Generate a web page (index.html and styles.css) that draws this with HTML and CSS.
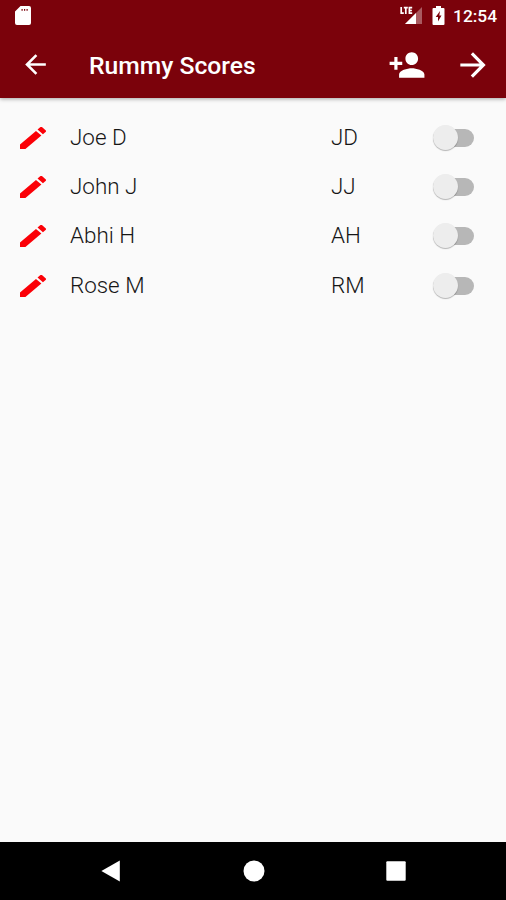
FILE: index.html
```html
<!DOCTYPE html>
<html lang="en">
<head>
<meta charset="utf-8">
<title>Rummy Scores</title>
<link rel="stylesheet" href="styles.css">
</head>
<body>
<svg class="defs" aria-hidden="true">
  <symbol id="pencil" viewBox="3 3 18 18" preserveAspectRatio="none"><path d="M3 17.25V21h3.75L17.81 9.94l-3.75-3.75L3 17.25zM20.71 7.04c.39-.39.39-1.02 0-1.41l-2.34-2.34c-.39-.39-1.02-.39-1.41 0l-1.83 1.83 3.75 3.75 1.83-1.83z"/></symbol>
</svg>
<header class="header">
  <div class="status">
    <svg class="sd" viewBox="0 0 16 19"><path fill-rule="evenodd" d="M5.500 0H14a2 2 0 0 1 2 2v15a2 2 0 0 1-2 2H2a2 2 0 0 1-2-2V5.500zM6.500 3v1.800h1.200V3zM9 3v1.800h1.200V3zM11.500 3v1.800h1.200V3z"/></svg>
    <div class="signal">
      <svg viewBox="0 0 24 20"><path class="dim" d="M22 1v17H5z"/><path d="M16 7V18H5z"/><path class="mask" d="M0 0h13v9H0z"/><path class="lte" d="M1.200 1v6.200h2.600M3.800 1.700h4M5.800 1.700v6.200M12.200 1.700H9.400v5.500h2.800M9.400 4.500h2.500"/></svg>
    </div>
    <svg class="battery" viewBox="0 0 12 19"><path fill-rule="evenodd" d="M3.500 0h5v2H11a1 1 0 0 1 1 1v15a1 1 0 0 1-1 1H1a1 1 0 0 1-1-1V3a1 1 0 0 1 1-1h2.500zM7.500 5L3.200 11h2.300v4.500L9 9.500H6.800z"/></svg>
    <span class="time">12:54</span>
  </div>
  <div class="toolbar">
    <svg class="back" viewBox="0 0 24 24"><path d="M20 11H7.830l5.590-5.590L12 4l-8 8 8 8 1.410-1.410L7.830 13H20v-2z"/></svg>
    <h1 class="title">Rummy Scores</h1>
    <svg class="add" viewBox="0 0 24 24"><path d="M15 12c2.210 0 4-1.790 4-4s-1.790-4-4-4-4 1.790-4 4 1.790 4 4 4zm-9-2V7H4v3H1v2h3v3h2v-3h3v-2H6zm9 4c-2.670 0-8 1.340-8 4v2h16v-2c0-2.660-5.330-4-8-4z"/></svg>
    <svg class="next" viewBox="0 0 24 24"><path d="M12 4l-1.410 1.410L16.170 11H4v2h12.170l-5.580 5.590L12 20l8-8z"/></svg>
  </div>
</header>
<main class="players">
  <div class="player"><svg class="edit"><use href="#pencil"/></svg><span>Joe D</span><span>JD</span><i class="switch"></i></div>
  <div class="player"><svg class="edit"><use href="#pencil"/></svg><span>John J</span><span>JJ</span><i class="switch"></i></div>
  <div class="player"><svg class="edit"><use href="#pencil"/></svg><span>Abhi H</span><span>AH</span><i class="switch"></i></div>
  <div class="player"><svg class="edit"><use href="#pencil"/></svg><span>Rose M</span><span>RM</span><i class="switch"></i></div>
</main>
<nav class="navbar">
  <svg viewBox="0 0 24 24"><path d="M20.800 1.500v21L2.400 12z"/></svg>
  <svg viewBox="0 0 24 24"><circle cx="12" cy="12" r="10.500"/></svg>
  <svg viewBox="0 0 24 24"><rect x="2.300" y="2.300" width="19.400" height="19.400" rx="1"/></svg>
</nav>
</body>
</html>
```
FILE: styles.css
```css
* { box-sizing: border-box; }
body {
  margin: 0;
  height: 900px;
  display: flex;
  flex-direction: column;
  overflow: hidden;
  background: #fafafa;
  font-family: Roboto, sans-serif;
}
svg { display: block; flex: none; }
.defs { display: none; }
.header {
  height: 98px;
  flex: none;
  background: #7b020b;
  color: #fff;
  fill: #fff;
  box-shadow: 0 1px 4px rgba(0, 0, 0, .35);
}
.status {
  height: 32px;
  display: flex;
  align-items: center;
  padding: 0 9px 0 15px;
}
.sd { width: 16px; height: 19px; margin-top: -2px; }
.signal { margin-left: auto; }
.signal svg { width: 24px; height: 20px; }
.dim { opacity: .35; }
.mask { fill: #7b020b; }
.lte { fill: none; stroke: #fff; stroke-width: 1.7; }
.battery { width: 13px; height: 19px; margin: -1px 8px 0 8px; }
.time { font-size: 17.4px; line-height: 32px; font-weight: 500; width: 44px; }
.toolbar {
  height: 65px;
  display: flex;
  align-items: center;
  padding: 0 14px 0 20px;
}
.back { width: 31px; height: 31px; }
.title {
  flex: 1;
  margin: 3px 0 0 38px;
  font-size: 24.7px;
  line-height: 32px;
  font-weight: 500;
}
.add { width: 38px; height: 38px; margin-right: 28px; }
.next { width: 38px; height: 38px; }
.players { flex: 1; padding-top: 14px; }
.player {
  height: 49.3px;
  display: grid;
  grid-template-columns: 50px 261px 102px 42px;
  align-items: center;
  padding-left: 20px;
  color: #161616;
  font-size: 22.4px;
  font-weight: 300;
  line-height: 30px;
}
.edit { width: 26px; height: 22px; margin-top: 2px; fill: #fb0007; }
.switch {
  position: relative;
  width: 41px;
  height: 18px;
  margin-top: 2px;
  border-radius: 9px;
  background: #b7b7b7;
}
.switch::before {
  content: "";
  position: absolute;
  left: 0;
  top: -4px;
  width: 25px;
  height: 25px;
  border-radius: 50%;
  background: #ededed;
  box-shadow: 0 1px 1px rgba(0, 0, 0, .28);
}
.navbar {
  height: 58px;
  flex: none;
  display: flex;
  justify-content: space-between;
  padding: 17px 98px 0 99px;
  background: #000;
  fill: #fff;
}
.navbar svg { width: 24px; height: 24px; }
```
